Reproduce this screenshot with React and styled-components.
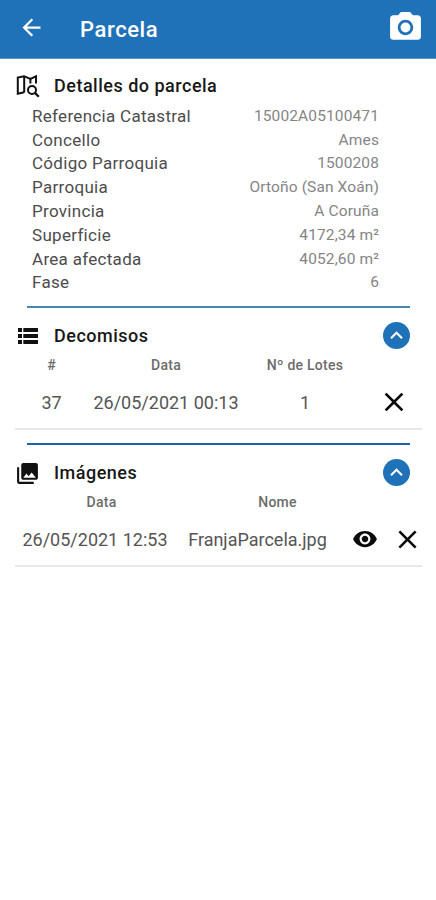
import styled, { createGlobalStyle } from 'styled-components';
import {
  MdArrowBack,
  MdClose,
  MdExpandLess,
  MdPhotoCamera,
  MdPhotoLibrary,
  MdVisibility,
} from 'react-icons/md';

const colors = {
  primary: '#1f71b8',
  title: '#171717',
  label: '#4c4c4c',
  value: '#858585',
  line: '#e8e8e8',
};

const GlobalStyle = createGlobalStyle`
  * {
    box-sizing: border-box;
  }

  body {
    margin: 0;
    background: #fff;
    font-family: Roboto, 'Liberation Sans', sans-serif;
  }
`;

const Screen = styled.div`
  min-height: 900px;
  background: #fff;
`;

const AppBar = styled.header`
  display: flex;
  align-items: center;
  height: 59px;
  padding: 0 12px 3px 18px;
  background: ${colors.primary};
  border-bottom: 1px solid #5b96c9;
  color: #fff;
`;

const AppTitle = styled.h1`
  flex: 1;
  margin: 3px 0 0 35px;
  font-size: 22px;
  font-weight: 500;
  letter-spacing: 0.6px;
`;

const IconButton = styled.button`
  display: flex;
  align-items: center;
  justify-content: center;
  padding: 0;
  border: 0;
  background: none;
  color: inherit;
  font-size: ${props => props.$size}px;
`;

const SectionHead = styled.div`
  display: flex;
  align-items: center;
  height: 28px;
  padding: 0 26px 0 15px;
`;

const SectionIcon = styled.span`
  display: flex;
  flex: none;
  align-items: center;
  justify-content: center;
  width: 25px;
  margin-right: 14px;
  color: #111;
  font-size: 27px;
`;

const SectionTitle = styled.h2`
  flex: 1;
  margin: 0;
  color: ${colors.title};
  font-size: 18px;
  font-weight: 500;
  line-height: 28px;
  letter-spacing: 0.5px;
`;

const Toggle = styled.button`
  display: flex;
  align-items: center;
  justify-content: center;
  width: 27px;
  height: 27px;
  margin-bottom: 1px;
  padding: 0;
  border: 0;
  border-radius: 50%;
  background: ${colors.primary};
  color: #fff;
  font-size: 25px;
`;

const Details = styled.section`
  padding-top: 13px;
`;

const DetailList = styled.dl`
  margin: 4px 57px 0 32px;
`;

const DetailRow = styled.div`
  display: flex;
  align-items: center;
  justify-content: space-between;
  height: 23.8px;
`;

const DetailLabel = styled.dt`
  color: ${colors.label};
  font-size: 17px;
  letter-spacing: 0.3px;
`;

const DetailValue = styled.dd`
  margin: 0;
  color: ${colors.value};
  font-size: 15.5px;
  letter-spacing: 0.12px;
`;

const Divider = styled.hr`
  height: 2px;
  margin: ${props => props.$top}px 26px 14px 27px;
  border: 0;
  background: ${props => props.$color};
`;

const Row = styled.div`
  display: grid;
  grid-template-columns: ${props => props.$columns};
  align-items: center;
  justify-items: center;
  margin: 0 14px 0 15px;
`;

const HeadRow = styled(Row)`
  height: 30px;
  color: #6c6c6c;
  font-size: 14px;
  font-weight: 500;
  letter-spacing: 0.25px;
`;

const DataRow = styled(Row)`
  height: 50px;
  padding-bottom: 4px;
  border-bottom: 2px solid ${colors.line};
  color: #555;
  font-size: 18px;
  white-space: nowrap;

  ${IconButton} {
    color: #0b0b0b;
  }
`;

const details = [
  ['Referencia Catastral', '15002A05100471'],
  ['Concello', 'Ames'],
  ['Código Parroquia', '1500208'],
  ['Parroquia', 'Ortoño (San Xoán)'],
  ['Provincia', 'A Coruña'],
  ['Superficie', '4172,34 m²'],
  ['Area afectada', '4052,60 m²'],
  ['Fase', '6'],
];

const lotColumns = '73px 156px 122px 1fr';
const imageHeadColumns = '173px 179px';
const imageColumns = '160px 165px 50px 34px';

const MapSearchIcon = () => (
  <svg width="24" height="24" viewBox="0 0 24 24" fill="none" stroke="currentColor" strokeWidth="2">
    <path d="M8.2 18.2 1.8 19.8V3.6L8 2.2 14.4 5 20 2.4V9.5" />
    <path d="M8.2 2.2V18.6M14.4 4.8V9.5" />
    <circle cx="16" cy="16" r="4" />
    <path d="m18.9 18.9 3.9 3.9" strokeWidth="2.3" />
  </svg>
);

const ListIcon = () => (
  <svg width="20" height="16" viewBox="0 0 20 16" fill="currentColor">
    <path d="M0 0h4v4H0zM5.3 0H20v4H5.3zM0 6h4v4H0zM5.3 6H20v4H5.3zM0 12h4v4H0zM5.3 12H20v4H5.3z" />
  </svg>
);

const CollapseButton = () => (
  <Toggle aria-label="Contraer">
    <MdExpandLess />
  </Toggle>
);

export default function App() {
  return (
    <Screen>
      <GlobalStyle />
      <AppBar>
        <IconButton $size={27}>
          <MdArrowBack />
        </IconButton>
        <AppTitle>Parcela</AppTitle>
        <IconButton $size={37}>
          <MdPhotoCamera />
        </IconButton>
      </AppBar>

      <Details>
        <SectionHead>
          <SectionIcon>
            <MapSearchIcon />
          </SectionIcon>
          <SectionTitle>Detalles do parcela</SectionTitle>
        </SectionHead>
        <DetailList>
          {details.map(([label, value]) => (
            <DetailRow key={label}>
              <DetailLabel>{label}</DetailLabel>
              <DetailValue>{value}</DetailValue>
            </DetailRow>
          ))}
        </DetailList>
      </Details>

      <Divider $top={12} $color="#4884b4" />
      <section>
        <SectionHead>
          <SectionIcon>
            <ListIcon />
          </SectionIcon>
          <SectionTitle>Decomisos</SectionTitle>
          <CollapseButton />
        </SectionHead>
        <HeadRow $columns={lotColumns}>
          <span>#</span>
          <span>Data</span>
          <span>Nº de Lotes</span>
        </HeadRow>
        <DataRow $columns={lotColumns}>
          <span>37</span>
          <span>26/05/2021 00:13</span>
          <span>1</span>
          <IconButton $size={32}>
            <MdClose />
          </IconButton>
        </DataRow>
      </section>

      <Divider $top={13} $color="#2063ab" />
      <section>
        <SectionHead>
          <SectionIcon>
            <MdPhotoLibrary />
          </SectionIcon>
          <SectionTitle>Imágenes</SectionTitle>
          <CollapseButton />
        </SectionHead>
        <HeadRow $columns={imageHeadColumns}>
          <span>Data</span>
          <span>Nome</span>
        </HeadRow>
        <DataRow $columns={imageColumns}>
          <span>26/05/2021 12:53</span>
          <span>FranjaParcela.jpg</span>
          <IconButton $size={26}>
            <MdVisibility />
          </IconButton>
          <IconButton $size={31}>
            <MdClose />
          </IconButton>
        </DataRow>
      </section>
    </Screen>
  );
}
